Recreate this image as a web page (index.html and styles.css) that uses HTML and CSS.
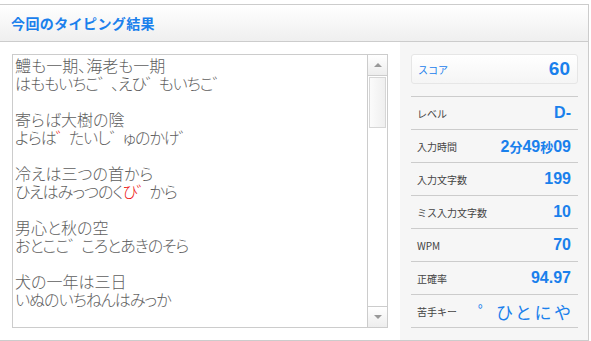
FILE: index.html
```html
<!DOCTYPE html>
<html lang="ja">
<head>
<meta charset="utf-8">
<title>今回のタイピング結果</title>
<link rel="stylesheet" href="styles.css">
</head>
<body>
<div class="result">
  <div class="result-head">
    <h2 class="result-title">今回のタイピング結果</h2>
  </div>
  <div class="result-body">
    <div class="text-col">
      <div class="textbox">
        <div class="textbox-content">
          <div class="pair"><div>鱧も一期、海老も一期</div><div class="yomi">はももいちこ<span class="dk">゛</span>、えひ<span class="dk">゛</span>もいちこ<span class="dk">゛</span></div></div>
          <div class="pair"><div>寄らば大樹の陰</div><div class="yomi">よらは<span class="dk miss">゛</span>たいし<span class="dk">゛</span>ゅのかけ<span class="dk">゛</span></div></div>
          <div class="pair"><div>冷えは三つの首から</div><div class="yomi">ひえはみっつのく<span class="miss">ひ<span class="dk">゛</span></span>から</div></div>
          <div class="pair"><div>男心と秋の空</div><div class="yomi">おとここ<span class="dk">゛</span>ころとあきのそら</div></div>
          <div class="pair"><div>犬の一年は三日</div><div class="yomi">いぬのいちねんはみっか</div></div>
        </div>
        <div class="scrollbar">
          <div class="sb-btn sb-up"><span class="tri tri-up"></span></div>
          <div class="sb-track"><div class="sb-thumb"></div></div>
          <div class="sb-btn sb-down"><span class="tri tri-down"></span></div>
        </div>
      </div>
    </div>
    <div class="stats">
      <div class="score-card">
        <span class="score-label">スコア</span>
        <span class="score-value">60</span>
      </div>
      <div class="stat-list">
        <div class="stat-row"><span class="stat-label">レベル</span><span class="stat-value">D-</span></div>
        <div class="stat-row"><span class="stat-label">入力時間</span><span class="stat-value">2<span class="kanji">分</span>49<span class="kanji">秒</span>09</span></div>
        <div class="stat-row"><span class="stat-label">入力文字数</span><span class="stat-value">199</span></div>
        <div class="stat-row"><span class="stat-label">ミス入力文字数</span><span class="stat-value">10</span></div>
        <div class="stat-row"><span class="stat-label">WPM</span><span class="stat-value">70</span></div>
        <div class="stat-row"><span class="stat-label">正確率</span><span class="stat-value">94.97</span></div>
        <div class="stat-row"><span class="stat-label">苦手キー</span><span class="stat-keys"><span class="handaku">゜</span>ひとにや</span></div>
      </div>
    </div>
  </div>
</div>
</body>
</html>
```

FILE: styles.css
```css
* { box-sizing: border-box; }
html, body { margin: 0; padding: 0; background: #fff; }
body {
  font-family: "Noto Sans CJK JP", "Noto Sans", sans-serif;
  width: 591px;
  height: 341px;
  overflow: hidden;
}
.result {
  margin-top: 4px;
  margin-left: -1px;
  width: 590px;
  border: 1px solid #cccccc;
}
.result-head {
  height: 37px;
  border-bottom: 1px solid #cccccc;
  background: linear-gradient(#ffffff, #efefef);
  display: flex;
  align-items: center;
  padding-left: 11px;
}
.result-title {
  margin: 0;
  font-size: 14px;
  font-weight: 700;
  color: #1a80ec;
  letter-spacing: 0.4px;
  line-height: 1;
}
.result-body {
  display: flex;
  height: 298px;
}
.text-col {
  width: 400px;
  padding: 12px 0 12px 12px;
  background: #fff;
}
.textbox {
  width: 376px;
  height: 274px;
  border: 1px solid #cccccc;
  display: flex;
  background: #fff;
}
.textbox-content {
  flex: 1;
  padding: 1px 0 0 2px;
  font-size: 16px;
  line-height: 18px;
  font-weight: 300;
  color: #5e5e5e;
  font-feature-settings: "palt";
  overflow: hidden;
}
.pair { margin-bottom: 18px; white-space: nowrap; }
.yomi { letter-spacing: -1px; }
.dk { margin-right: -2px; }
.miss { color: #ee1111; }
.scrollbar {
  width: 20px;
  border-left: 1px solid #cccccc;
  display: flex;
  flex-direction: column;
}
.sb-btn {
  height: 21px;
  background: linear-gradient(#ffffff, #ededed);
  display: flex;
  align-items: center;
  justify-content: center;
}
.sb-up { border-bottom: 1px solid #cccccc; }
.sb-down { border-top: 1px solid #cccccc; }
.tri { width: 0; height: 0; border-left: 4px solid transparent; border-right: 4px solid transparent; }
.tri-up { border-bottom: 4px solid #999; }
.tri-down { border-top: 4px solid #999; }
.sb-track { flex: 1; padding: 1px 1px 0 1px; }
.sb-thumb {
  height: 51px;
  border: 1px solid #d6d6d6;
  background: linear-gradient(90deg, #fbfbfb, #efefef);
}
.stats {
  width: 188px;
  background: #f6f6f6;
  padding: 12px 10px 0 11px;
}
.score-card {
  height: 30px;
  border: 1px solid #e6e6e6;
  border-radius: 3px;
  background: linear-gradient(#ffffff, #f5f5f5);
  display: flex;
  align-items: center;
  justify-content: space-between;
  padding: 0 7px 0 6px;
}
.score-label { font-size: 10px; color: #1a80ec; }
.score-value {
  font-family: "Liberation Sans", "Noto Sans CJK JP", sans-serif;
  font-weight: 700;
  font-size: 19px;
  color: #1a80ec;
}
.stat-list {
  margin-top: 12px;
  border-top: 1px solid #cccccc;
}
.stat-row {
  height: 33px;
  border-bottom: 1px solid #cccccc;
  display: flex;
  align-items: center;
  justify-content: space-between;
  padding: 0 7px 0 6px;
}
.stat-label { font-size: 10px; color: #444444; }
.stat-value {
  font-family: "Liberation Sans", "Noto Sans CJK JP", sans-serif;
  font-weight: 700;
  font-size: 16px;
  color: #1a80ec;
}
.kanji { font-family: "Noto Sans CJK JP", sans-serif; font-size: 13px; }
.stat-keys {
  font-size: 17px;
  color: #1a80ec;
  letter-spacing: 2.5px;
  line-height: 1;
  margin-right: -2.5px;
}
.handaku { font-size: 16px; vertical-align: 1px; margin-right: 2px; letter-spacing: 0; }
```
